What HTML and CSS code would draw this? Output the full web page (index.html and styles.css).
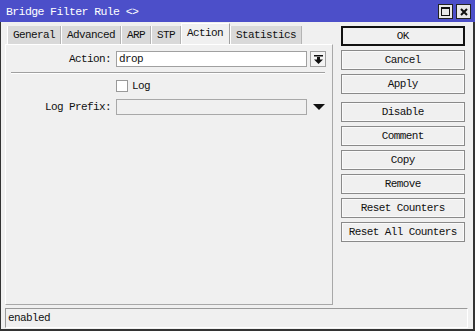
FILE: index.html
```html
<!DOCTYPE html>
<html lang="en">
<head>
    <meta charset="UTF-8">
    <title>Bridge Filter Rule</title>
    <link rel="stylesheet" href="styles.css">
</head>
<body>
    <div class="window">
        <div class="titlebar">
            <span class="title">Bridge Filter Rule &lt;&gt;</span>
            <div class="win-btns">
                <span class="win-btn max"><span class="max-box"></span></span>
                <span class="win-btn close">
                    <svg width="8" height="8" viewBox="0 0 8 8"><path d="M1 1 L7 7 M7 1 L1 7" stroke="#111" stroke-width="2"/></svg>
                </span>
            </div>
        </div>

        <div class="main">
            <div class="left">
                <div class="tabs">
                    <span class="tab">General</span>
                    <span class="tab">Advanced</span>
                    <span class="tab">ARP</span>
                    <span class="tab">STP</span>
                    <span class="tab active">Action</span>
                    <span class="tab">Statistics</span>
                </div>
                <div class="panel">
                    <div class="row">
                        <label class="lbl">Action:</label>
                        <div class="field">drop</div>
                        <span class="drop-btn">
                            <svg width="9" height="9" viewBox="0 0 9 9">
                                <rect x="0" y="0" width="9" height="1.5" fill="#111"/>
                                <rect x="3" y="2" width="3" height="3" fill="#111"/>
                                <polygon points="0,4.5 9,4.5 4.5,9" fill="#111"/>
                            </svg>
                        </span>
                    </div>
                    <div class="sep"></div>
                    <div class="row check-row">
                        <span class="lbl"></span>
                        <span class="checkbox"></span>
                        <span class="check-text">Log</span>
                    </div>
                    <div class="row">
                        <label class="lbl">Log Prefix:</label>
                        <div class="field disabled"></div>
                        <span class="tri"></span>
                    </div>
                </div>
            </div>

            <div class="buttons">
                <button class="btn default">OK</button>
                <button class="btn">Cancel</button>
                <button class="btn">Apply</button>
                <button class="btn spaced">Disable</button>
                <button class="btn">Comment</button>
                <button class="btn">Copy</button>
                <button class="btn">Remove</button>
                <button class="btn">Reset Counters</button>
                <button class="btn">Reset All Counters</button>
            </div>
        </div>

        <div class="status">enabled</div>
    </div>
</body>
</html>
```

FILE: styles.css
```css
* {
    box-sizing: border-box;
}

body {
    margin: 0;
    font-family: 'Liberation Mono', 'DejaVu Sans Mono', monospace;
    font-size: 11px;
    letter-spacing: -0.6px;
    color: #111;
    background: #f0f0f0;
}

.window {
    width: 475px;
    height: 331px;
    display: flex;
    flex-direction: column;
    background: #f0f0f0;
    border-left: 1px solid #333;
    border-right: 2px solid #333;
    border-bottom: 2px solid #333;
}

.titlebar {
    height: 22px;
    background: #4c4fc9;
    display: flex;
    align-items: center;
    justify-content: space-between;
    padding: 0 4px 0 6px;
    margin-left: -1px;
    margin-right: -2px;
}

.title {
    color: #fff;
    font-size: 11.5px;
}

.win-btns {
    display: flex;
    gap: 3px;
    padding-top: 1px;
}

.win-btn {
    width: 15px;
    height: 15px;
    background: #e8e8e8;
    border: 1px solid #222;
    display: flex;
    align-items: center;
    justify-content: center;
}

.max-box {
    width: 9px;
    height: 9px;
    border: 1px solid #111;
    border-top-width: 2px;
}

.main {
    flex: 1;
    display: flex;
    gap: 7px;
    padding: 1px 8px 0 4px;
}

.left {
    width: 329px;
    display: flex;
    flex-direction: column;
}

.tabs {
    height: 21px;
    display: flex;
    align-items: flex-end;
    padding-left: 2px;
}

.tab {
    height: 18px;
    padding: 0 5px;
    background: #d9d9d9;
    border-left: 1px solid #fff;
    border-right: 1px solid #b4b4b4;
    line-height: 18px;
}

.tab.active {
    height: 21px;
    background: #f0f0f0;
    border-right: 1px solid #a0a0a0;
    border-top: 1px solid #fff;
    line-height: 18px;
    padding: 0 6px 0 5px;
}

.panel {
    flex: 1;
    border: 1px solid #a8a8a8;
    border-top-color: #fff;
    border-left-color: #fff;
    padding: 6px 0 0 0;
    margin-bottom: 1px;
}

.row {
    display: flex;
    align-items: center;
    height: 16px;
}

.lbl {
    width: 105px;
    text-align: right;
    margin-right: 5px;
}

.field {
    width: 191px;
    height: 16px;
    background: #fff;
    border: 1px solid #a0a0a0;
    padding-left: 2px;
    line-height: 14px;
}

.field.disabled {
    background: #f0f0f0;
    border-color: #a8a8a8;
}

.drop-btn {
    width: 16px;
    height: 16px;
    margin-left: 3px;
    border: 1px solid #a0a0a0;
    background: #f4f4f4;
    display: flex;
    align-items: center;
    justify-content: center;
}

.sep {
    height: 2px;
    margin: 5px 7px 6px 5px;
    border-top: 1px solid #a0a0a0;
    border-bottom: 1px solid #fff;
}

.check-row {
    height: 12px;
    margin-bottom: 7px;
}

.checkbox {
    width: 12px;
    height: 12px;
    background: #fff;
    border: 1px solid #999;
}

.check-text {
    margin-left: 4px;
}

.tri {
    margin-left: 6px;
    width: 0;
    height: 0;
    border-left: 6px solid transparent;
    border-right: 6px solid transparent;
    border-top: 6px solid #111;
}

.buttons {
    width: 125px;
    display: flex;
    flex-direction: column;
    gap: 4px;
    padding-top: 3px;
    margin-left: 1px;
}

.btn {
    height: 20px;
    font-family: inherit;
    font-size: 11px;
    letter-spacing: -0.6px;
    color: #111;
    background: #f0f0f0;
    border: 1px solid #8a8a8a;
    box-shadow: inset 0 0 0 1px #fafafa;
    padding: 0;
}

.btn.default {
    border: 2px solid #111;
    box-shadow: none;
}

.btn.spaced {
    margin-top: 4px;
}

.status {
    height: 20px;
    margin: 2px 5px 1px 4px;
    border-top: 1px solid #9a9a9a;
    border-left: 1px solid #9a9a9a;
    border-bottom: 1px solid #fff;
    border-right: 1px solid #fff;
    padding-left: 2px;
    line-height: 18px;
}
```
